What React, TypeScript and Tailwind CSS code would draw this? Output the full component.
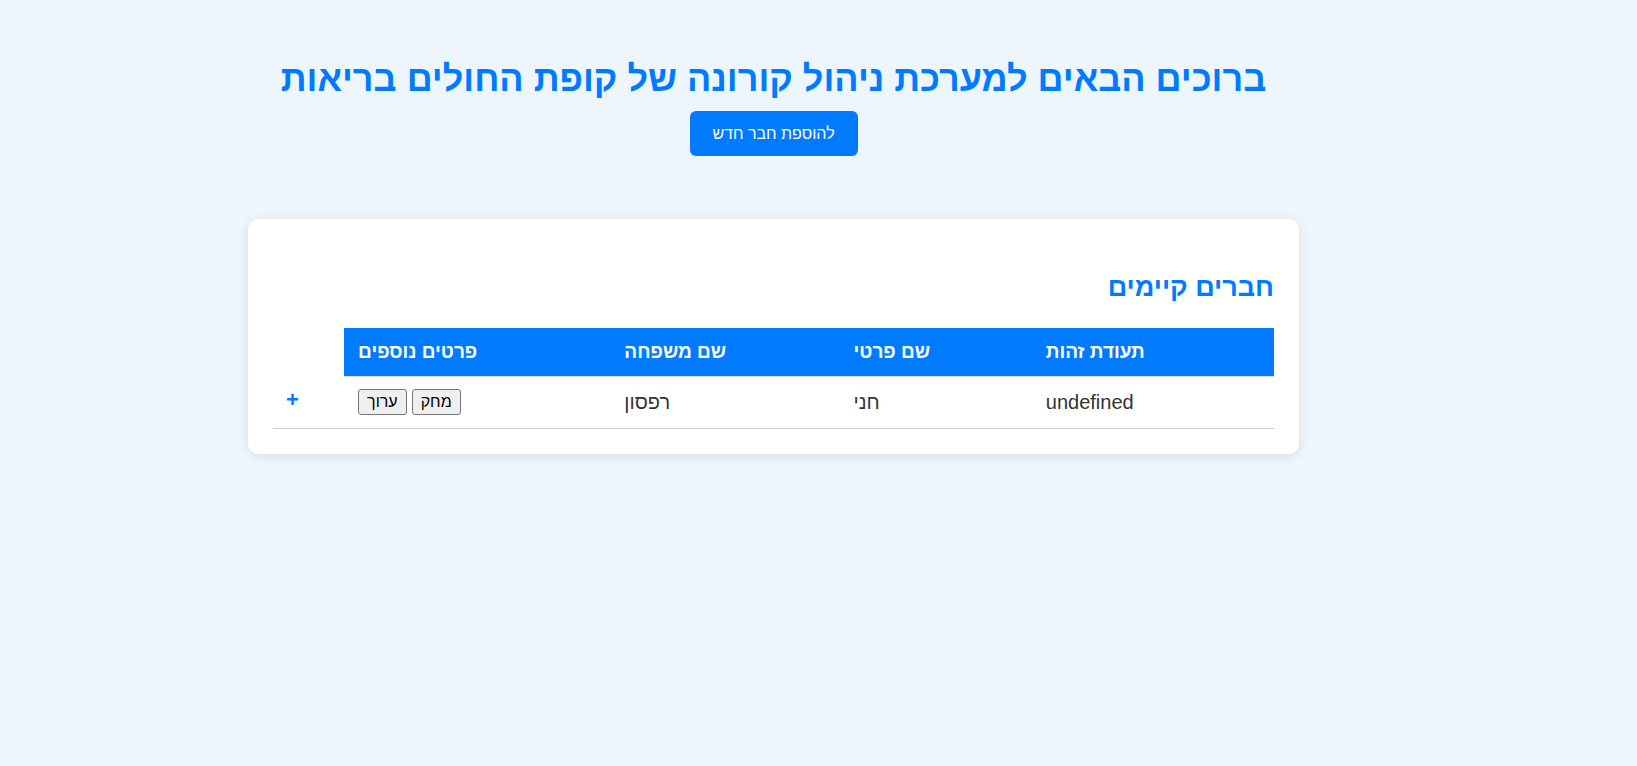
import React from "react";

interface Member {
  id?: string;
  firstName: string;
  lastName: string;
}

const members: Member[] = [{ firstName: "חני", lastName: "רפסון" }];

const th =
  "h-[48px] border-b border-[#ddd] bg-[#007bff] px-[14px] text-left text-[19px] font-bold text-white";
const td = "h-[52px] border-b border-[#ccc] px-[14px] text-[20px] text-[#333]";
const smallBtn =
  "h-[26px] rounded-[3px] border border-[#767676] bg-[#efefef] px-[8px] text-[16px] leading-none text-black";

export default function App() {
  return (
    <div
      dir="rtl"
      className="min-h-screen bg-[#eef6fd] font-['Liberation_Sans',Arial,sans-serif]"
    >
      <div className="flex justify-center pr-[90px]">
        <div className="flex w-[1051px] flex-col items-center pt-[56px]">
          <h1 className="text-[36px] font-bold leading-[46px] text-[#007bff]">
            ברוכים הבאים למערכת ניהול קורונה של קופת החולים בריאות
          </h1>
          <button className="mt-[9px] h-[45px] w-[168px] rounded-[6px] bg-[#007bff] text-[16px] text-white">
            להוספת חבר חדש
          </button>

          {/* Members card */}
          <div className="mt-[63px] w-full rounded-[10px] bg-white px-[25px] pb-[25px] pt-[25px] shadow-[0_2px_12px_rgba(0,0,0,0.1)]">
            <h2 className="mb-[25px] mt-[27px] text-right text-[27px] font-bold leading-[32px] text-[#007bff]">
              חברים קיימים
            </h2>
            <table className="w-full border-collapse text-left">
              <colgroup>
                <col className="w-[242px]" />
                <col className="w-[192px]" />
                <col className="w-[229px]" />
                <col className="w-[266px]" />
                <col className="w-[71px]" />
              </colgroup>
              <thead>
                <tr>
                  <th className={th}>תעודת זהות</th>
                  <th className={th}>שם פרטי</th>
                  <th className={th}>שם משפחה</th>
                  <th className={th}>פרטים נוספים</th>
                </tr>
              </thead>
              <tbody>
                {members.map((m, i) => (
                  <tr key={i}>
                    <td className={td}>{String(m.id)}</td>
                    <td className={td}>{m.firstName}</td>
                    <td className={td}>{m.lastName}</td>
                    <td className={td}>
                      <div className="flex justify-end gap-[5px]">
                        <button className={smallBtn}>מחק</button>
                        <button className={smallBtn}>ערוך</button>
                      </div>
                    </td>
                    <td className="h-[52px] border-b border-[#ccc] px-[13px]">
                      <button className="text-[22px] font-bold leading-none text-[#007bff]">
                        +
                      </button>
                    </td>
                  </tr>
                ))}
              </tbody>
            </table>
          </div>
        </div>
      </div>
    </div>
  );
}
